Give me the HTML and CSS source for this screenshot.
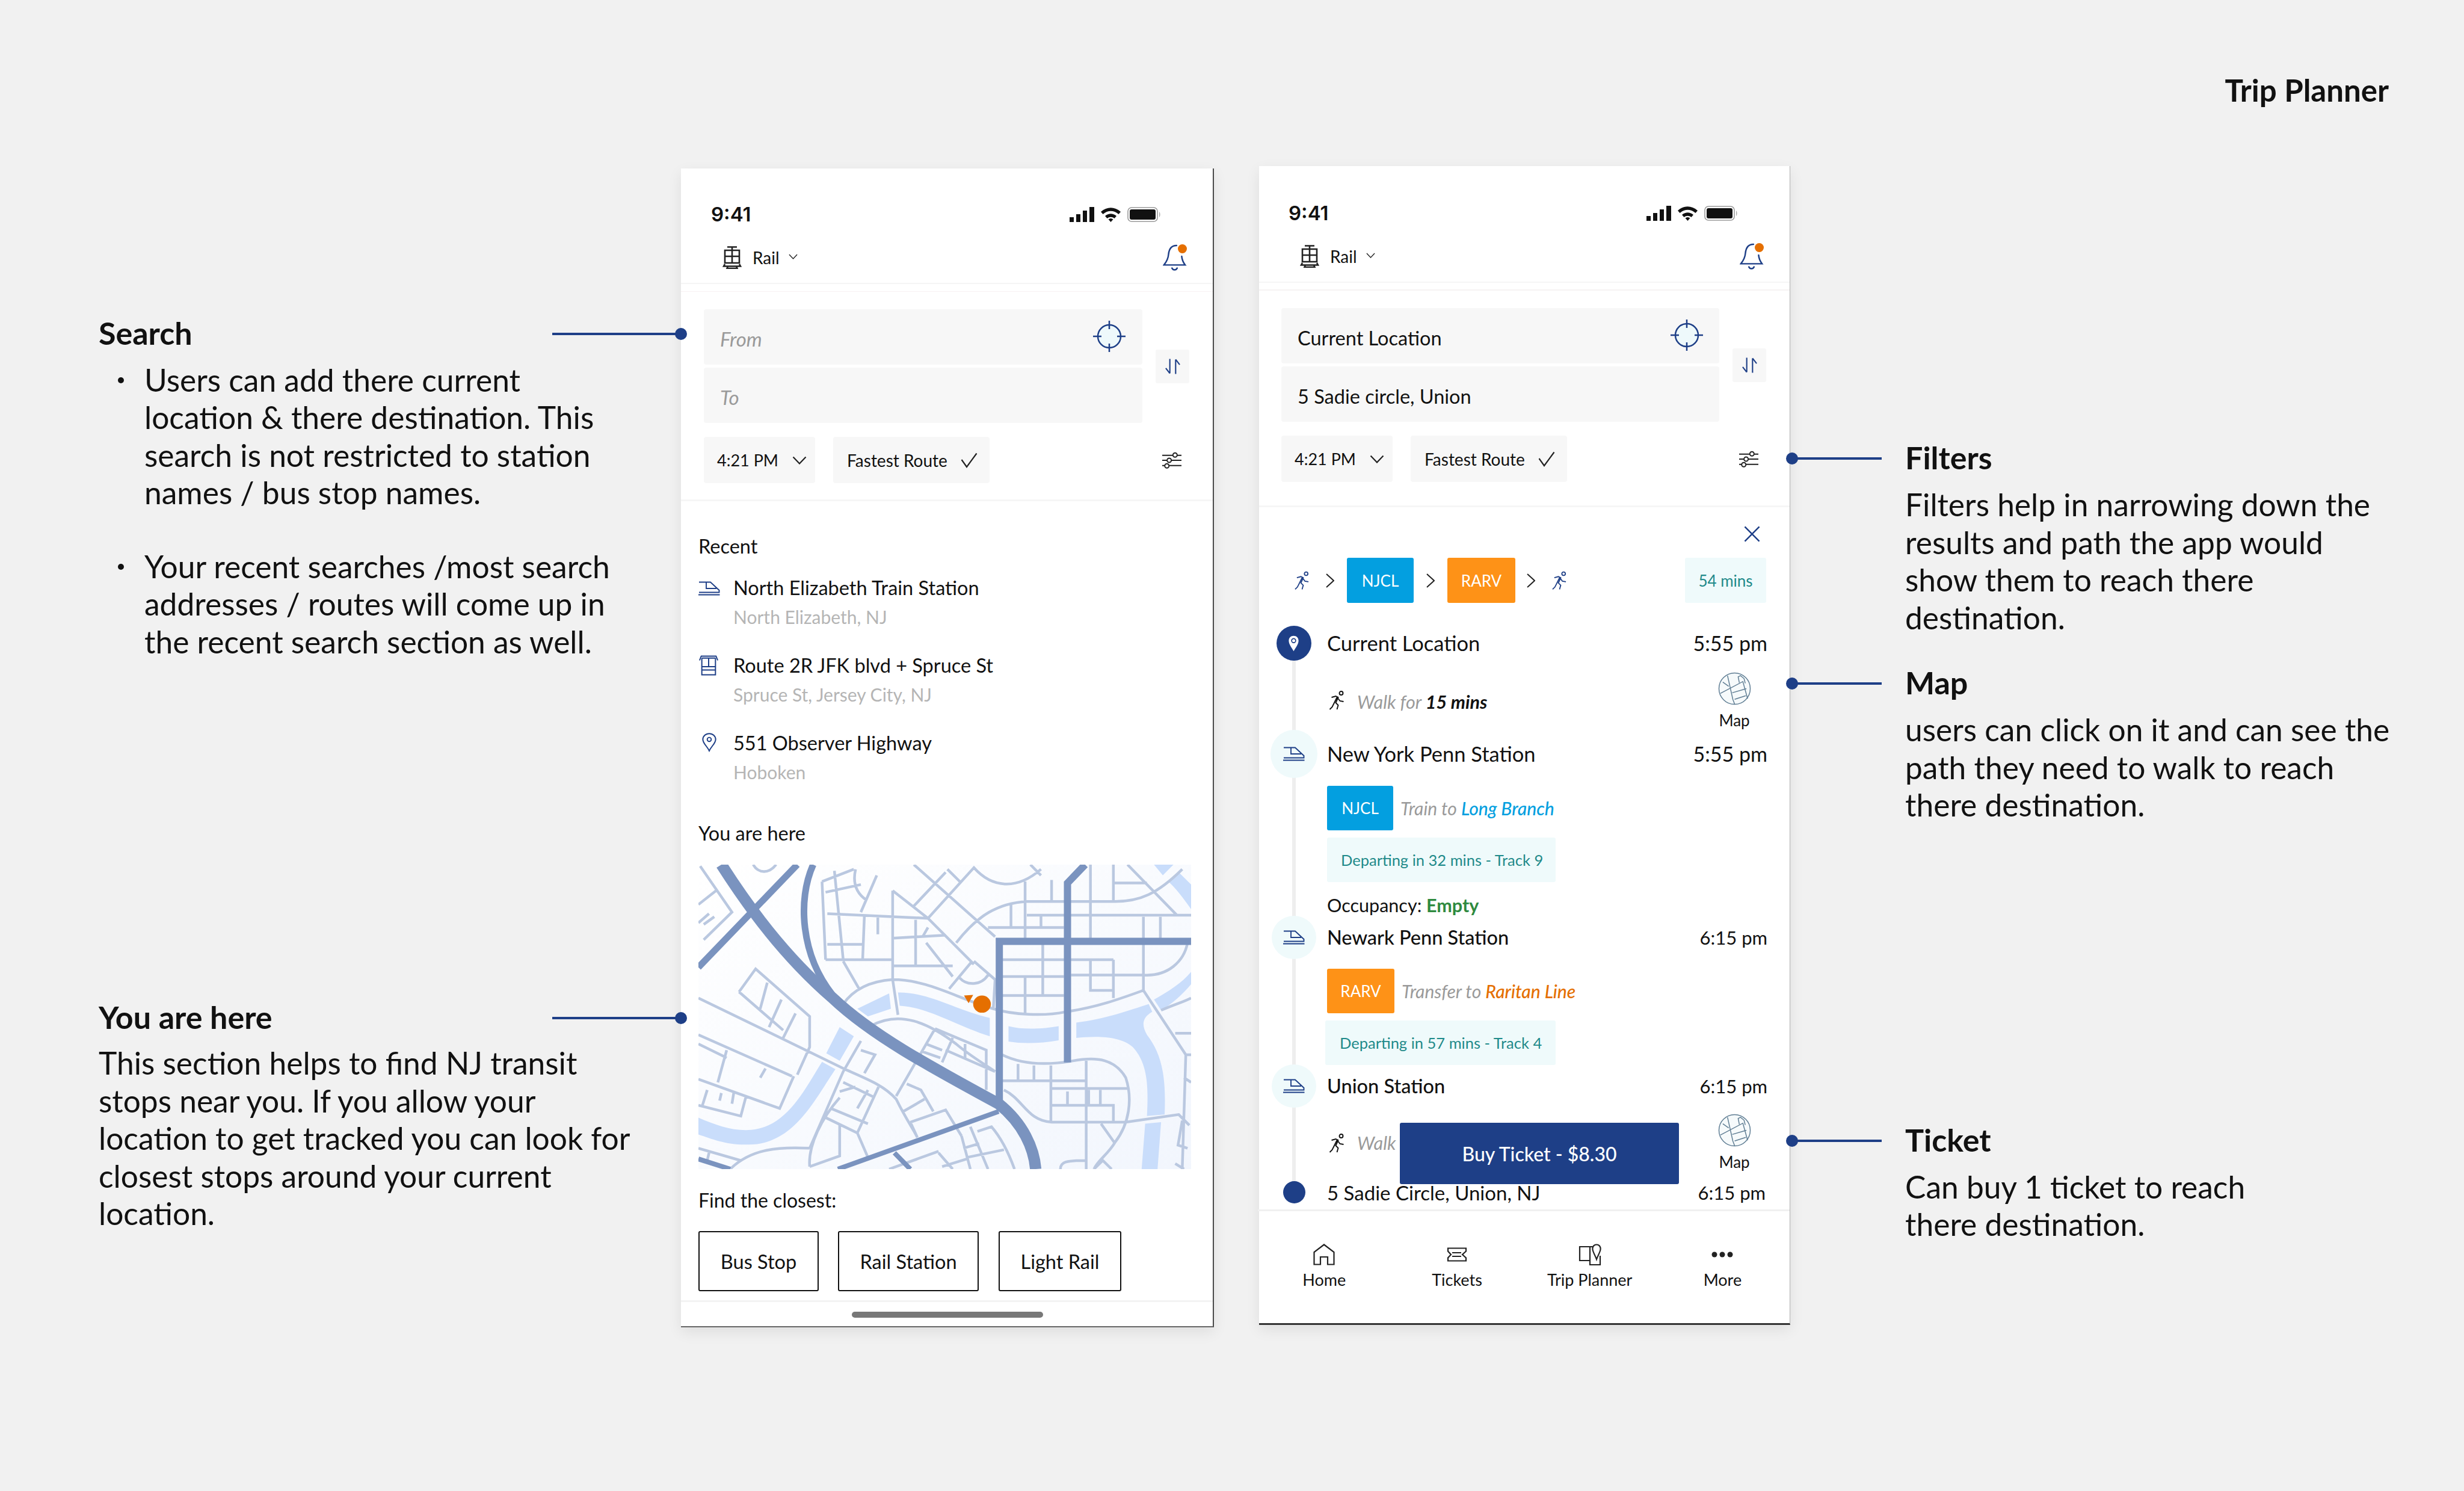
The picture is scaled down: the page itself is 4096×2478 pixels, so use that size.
FILE: index.html
```html
<!DOCTYPE html>
<html lang="en">
<head>
<meta charset="utf-8">
<title>Trip Planner</title>
<link rel="stylesheet" href="styles.css">
</head>
<body>
<svg class="sprite" xmlns="http://www.w3.org/2000/svg">
  <symbol id="i-rail" viewBox="0 0 32 38"><path d="M8 1.500H24M16 1.500V7M4 7H28V28H4ZM4 17H28M16 7V28M4 30L2 33.500H30L28 30M9 33.500L7.500 37H24.500L23 33.500" fill="none" stroke="#222" stroke-width="2.600"/></symbol>
  <symbol id="i-bell" viewBox="0 0 42 48"><path d="M24 3C15 3 11 9 10 18C9.500 26 6 32 2 37H39C36 33 33.500 29 33 22M16 42.500C18 46.500 23 46.500 25 42.500" fill="none" stroke="#1e3f87" stroke-width="2.600" stroke-linecap="round"/></symbol>
  <symbol id="i-cross" viewBox="0 0 54 52"><circle cx="27" cy="26" r="19" fill="#eef9fb" stroke="#1e3f87" stroke-width="2.500"/><path d="M27 0V14M27 38V52M0 26H14M40 26H54" stroke="#1e3f87" stroke-width="2.500"/></symbol>
  <symbol id="i-swap" viewBox="0 0 28 28"><path d="M9 1V26M9 26L2 17M19 27V2M19 2L26 11" fill="none" stroke="#1e3f87" stroke-width="2.200"/></symbol>
  <symbol id="i-down" viewBox="0 0 24 14"><path d="M1.500 1.500L12 12.500L22.500 1.500" fill="none" stroke="#222" stroke-width="2.200"/></symbol>
  <symbol id="i-check" viewBox="0 0 28 26"><path d="M1.500 12L10 24L26.500 1.500" fill="none" stroke="#222" stroke-width="2.200"/></symbol>
  <symbol id="i-filter" viewBox="0 0 34 28"><path d="M1 5.500H34M1 14H34M1 23H34" stroke="#222" stroke-width="2.200"/><circle cx="23" cy="5" r="3.600" fill="#fff" stroke="#222" stroke-width="2"/><circle cx="13" cy="14" r="3.600" fill="#fff" stroke="#222" stroke-width="2"/><circle cx="9" cy="23.500" r="3.600" fill="#fff" stroke="#222" stroke-width="2"/></symbol>
  <symbol id="i-train" viewBox="0 0 36 24"><path d="M1 1.500H20L34.500 15V18.500H1M13 1.500V12H30M0 22.500H35.500" fill="none" stroke="#1e3f87" stroke-width="1.900"/></symbol>
  <symbol id="i-stop" viewBox="0 0 34 36"><path d="M1 9L4 1.500H30L33 9M5 5H29M5 5V34.500H29V5M5 20H29M5 26H29M17 5V20" fill="none" stroke="#1e3f87" stroke-width="2.100"/></symbol>
  <symbol id="i-pin" viewBox="0 0 26 34"><path d="M13 32.500C9 24 1.500 19 1.500 12C1.500 6 6.500 1.500 13 1.500C19.500 1.500 24.500 6 24.500 12C24.500 19 17 24 13 32.500Z" fill="none" stroke="#1e3f87" stroke-width="2.200"/><circle cx="13" cy="12" r="3.600" fill="none" stroke="#1e3f87" stroke-width="2"/></symbol>
  <symbol id="i-walk" viewBox="0 0 26 32"><g fill="none" stroke="currentColor" stroke-width="1.900"><circle cx="20" cy="4" r="3"/><path d="M4 11L11 9L15 11L11 20L15 24L13 31M13 11L8 21L5 27L1 31M15 13L18 17L24 18"/></g></symbol>
  <symbol id="i-chev" viewBox="0 0 14 24"><path d="M1 1L13 12L1 23" fill="none" stroke="#222" stroke-width="2"/></symbol>
  <symbol id="i-globe" viewBox="0 0 56 56"><g fill="#f6fafb" stroke="#5f7d93" stroke-width="1.500"><circle cx="28" cy="28" r="26.500"/><path fill="none" d="M16 6L25 46L28 54M4 36L42 16L50 45M8 17L18 24M24 35L48 28M28 46L47 40M36 18L34 8L38 6L44 11L46 19"/></g></symbol>
  <symbol id="i-home" viewBox="0 0 36 36"><path d="M1.500 34.500V14L18 1.500L34.500 14V34.500H24V22H12V34.500Z" fill="none" stroke="#222" stroke-width="2.200"/></symbol>
  <symbol id="i-ticket" viewBox="0 0 34 24"><path d="M2 1.500H32V6.500L26 12L32 17.500V22.500H2V17.500L7 12L2 6.500ZM9 9H24M9 15H24" fill="none" stroke="#222" stroke-width="2.200"/></symbol>
  <symbol id="i-trip" viewBox="0 0 38 36"><path d="M24 5H2V28H19V35H36V20M19 5V28M30 1.500C25 1.500 23 6 23.500 9.500C24 14 28 20 30 26C32 20 36 14 36.500 9.500C37 6 35 1.500 30 1.500Z" fill="none" stroke="#222" stroke-width="2.200"/></symbol>
  <symbol id="i-more" viewBox="0 0 36 12"><circle cx="5" cy="6" r="4.500" fill="#222"/><circle cx="18" cy="6" r="4.500" fill="#222"/><circle cx="31" cy="6" r="4.500" fill="#222"/></symbol>
  <symbol id="i-signal" viewBox="0 0 41 25"><path d="M0 17H7V25H0ZM11 12H18V25H11ZM22 6H29V25H22ZM33 0H41V25H33Z" fill="#111"/></symbol>
  <symbol id="i-wifi" viewBox="0 0 35 25"><path d="M1 8C11 -1 24 -1 34 8L30.500 12C22.500 5 12.500 5 4.500 12ZM8 15C14 10 21 10 27 15L23.500 19C20 16 15 16 11.500 19ZM13.500 20.500C16 18.500 19 18.500 21.500 20.500L17.500 25Z" fill="#111"/></symbol>
  <symbol id="i-batt" viewBox="0 0 56 25"><rect x="1" y="1" width="49" height="23" rx="6" fill="none" stroke="#999" stroke-width="1.600"/><rect x="4" y="4" width="43" height="17" rx="3" fill="#111"/><path d="M53 8C55 9 55 16 53 17Z" fill="#aaa"/></symbol>
</svg>

<main class="board">
  <h1 class="board-title">Trip Planner</h1>
  <div class="board-main">

    <section class="notes notes-left">
      <article class="note note-search pin-right">
        <h2 class="note-head">Search</h2>
        <ul class="note-list">
          <li>Users can add there current location &amp; there destination. This search is not restricted to station names / bus stop names.</li>
          <li>Your recent searches /most search addresses / routes will come up in the recent search section as well.</li>
        </ul>
      </article>
      <article class="note note-here pin-right">
        <h2 class="note-head">You are here</h2>
        <p class="note-body">This section helps to find NJ transit stops near you. If you allow your location to get tracked you can look for closest stops around your current location.</p>
      </article>
    </section>

    <section class="phone phone-a">
      <div class="status"><span class="clock">9:41</span><span class="status-icons"><svg class="ic-signal"><use href="#i-signal"/></svg><svg class="ic-wifi"><use href="#i-wifi"/></svg><svg class="ic-batt"><use href="#i-batt"/></svg></span></div>
      <div class="topbar">
        <svg class="ic-rail"><use href="#i-rail"/></svg><span class="rail-label">Rail</span><svg class="ic-raildown"><use href="#i-down"/></svg>
        <span class="bell"><svg class="ic-bell"><use href="#i-bell"/></svg></span>
      </div>
      <div class="search search-a">
        <div class="fields">
          <div class="field-col">
            <div class="field placeholder">From<svg class="ic-cross"><use href="#i-cross"/></svg></div>
            <div class="field placeholder">To</div>
          </div>
          <div class="swap"><svg class="ic-swap"><use href="#i-swap"/></svg></div>
        </div>
        <div class="chips">
          <div class="chip chip-time">4:21 PM<svg class="ic-down"><use href="#i-down"/></svg></div>
          <div class="chip chip-route">Fastest Route<svg class="ic-check"><use href="#i-check"/></svg></div>
          <svg class="ic-filter"><use href="#i-filter"/></svg>
        </div>
      </div>
      <div class="home-body">
        <div class="label label-recent">Recent</div>
        <div class="recent">
          <svg class="rec-icon ic-train"><use href="#i-train"/></svg>
          <div><div class="rec-title">North Elizabeth Train Station</div><div class="rec-sub">North Elizabeth, NJ</div></div>
        </div>
        <div class="recent">
          <svg class="rec-icon ic-stop"><use href="#i-stop"/></svg>
          <div><div class="rec-title">Route 2R JFK blvd + Spruce St</div><div class="rec-sub">Spruce St, Jersey City, NJ</div></div>
        </div>
        <div class="recent">
          <svg class="rec-icon ic-pin"><use href="#i-pin"/></svg>
          <div><div class="rec-title">551 Observer Highway</div><div class="rec-sub">Hoboken</div></div>
        </div>
        <div class="label label-here">You are here</div>
        <svg class="map" viewBox="70 35 1395 993" preserveAspectRatio="none" xmlns="http://www.w3.org/2000/svg">
          <defs><linearGradient id="mapbg" x1="0" y1="0" x2="1" y2="1"><stop offset="0" stop-color="#ffffff"/><stop offset="1" stop-color="#f2f6fd"/></linearGradient></defs>
          <rect x="70" y="35" width="1395" height="993" fill="url(#mapbg)"/>
          <path class="water" d="M520,505 L610,455 L615,505 L550,530 Z M635,452 C720,450 800,510 895,535 L895,595 C800,560 720,500 640,495 Z M948,562 C990,575 1050,570 1090,562 L1090,608 C1040,618 990,620 948,612 Z M1140,550 C1220,540 1290,510 1345,490 L1355,515 C1325,535 1325,560 1340,590 C1380,650 1395,720 1390,850 L1340,855 C1345,750 1340,680 1300,630 C1260,590 1190,595 1140,600 Z M1335,880 L1380,875 L1370,1028 L1325,1028 Z M470,565 L510,595 L470,675 L432,650 Z M420,678 L458,702 C400,800 340,950 210,948 C150,950 110,930 70,915 L70,860 C120,885 170,905 220,900 C320,890 370,770 420,678 Z M1360,35 L1415,35 L1385,70 Z M1430,60 L1465,100 L1465,180 C1440,140 1420,110 1400,90 Z M1465,385 L1465,425 C1440,460 1410,490 1380,510 L1360,475 C1400,450 1440,420 1465,385 Z"/>
          <path class="minor" d="M70,165 L120,120 M75,40 L165,190 L85,280 M70,225 L100,195 M85,230 L115,205 M225,35 C240,65 270,65 290,35 M420,90 L430,345 M420,90 L510,50 M430,125 L530,100 M455,55 L480,345 M435,195 L720,210 M435,295 L535,295 M430,345 L620,345 M530,190 L575,70 M540,200 L535,345 M578,200 L578,262 M620,120 L620,410 M620,275 L770,265 M685,215 L685,365 M620,365 L790,365 M515,50 C505,100 520,130 545,150 M620,120 L720,210 L850,360 M680,35 L910,270 M775,50 L810,90 M680,170 L770,60 M720,210 L850,45 C900,110 970,120 1040,50 M1010,35 L1040,70 M720,240 L705,270 M715,290 L790,400 M800,290 C860,200 920,160 1000,155 L1250,155 C1320,155 1370,130 1440,50 M995,90 V275 M1070,85 V155 M1180,35 V280 M1245,35 V155 M1245,95 H1340 M1285,35 L1425,200 M1330,205 V280 M1378,205 V280 M955,165 V240 M890,240 H1105 M1000,200 H1465 M1040,200 V240 M1045,290 V460 M995,400 V520 M1180,345 V445 H1245 M1245,345 V470 M1330,290 V445 M930,345 H1245 M930,400 H1105 M1125,395 H1330 C1400,400 1445,350 1455,290 M930,462 H1105 M480,490 C510,440 560,415 620,410 C720,410 800,470 905,505 C960,525 1050,530 1110,515 C1200,500 1270,470 1330,445 L1450,655 L1440,1028 M1380,510 C1420,490 1450,480 1465,470 M1420,585 H1465 M1450,655 H1465 M1445,730 L1465,745 M560,560 C640,510 720,550 800,620 C840,660 900,700 910,710 M930,655 C1000,695 1080,685 1130,675 C1200,660 1250,670 1280,730 C1300,800 1290,880 1250,940 C1230,980 1200,1000 1190,1028 M975,685 V740 M1020,690 V740 M1068,690 V875 M1168,675 V1028 M930,740 H1165 M1068,765 H1290 M1115,775 V820 M1068,820 H1245 V875 M1175,770 V820 M1208,770 V820 M935,770 C990,800 1000,870 1070,875 H1280 L1430,850 L1460,885 M1440,870 L1428,950 L1455,960 M1210,880 L1250,945 M1095,1028 C1095,1005 1110,1000 1165,1000 M1190,1028 L1215,1000 L1240,1028 M1420,1010 L1445,1028 M70,470 L490,705 C560,740 600,760 630,800 C660,870 680,900 690,925 M185,450 L232,375 L385,530 L385,630 L350,720 M185,450 L310,575 M265,420 L245,505 M305,475 L270,565 M345,520 L310,600 M70,590 L335,725 M150,640 L125,745 M70,620 L150,665 M70,735 L300,830 L340,725 M260,700 L245,730 M95,770 L80,825 M135,780 L130,805 M170,780 L165,815 M205,790 L190,855 L70,820 M530,610 L480,710 L385,960 M385,1020 C380,950 420,860 470,795 M385,960 C300,955 220,960 160,1028 M385,1020 L470,985 V885 M70,960 L190,1000 M100,975 L95,1000 M430,860 L520,910 L550,990 M520,910 L580,760 M445,830 L550,880 M470,775 L515,760 M480,745 L570,795 M550,770 L520,830 M530,640 L570,655 L540,715 M740,570 L700,650 L630,790 M740,570 L885,640 V770 M715,620 L760,640 M705,645 L755,665 M790,600 L760,680 M825,620 V665 M770,640 L910,710 M660,750 L700,770 L735,840 M650,840 L710,800 M670,875 L770,835 L815,920 M670,875 L690,925 M840,890 L890,1028 M815,920 L840,1028 M860,905 L900,890 C930,930 950,980 965,1028 M830,990 L935,965 M820,960 L865,945 M750,975 L790,1028 M750,970 L610,1028 M760,1020 L830,995 M480,350 L525,440 M620,410 L635,525 M780,440 L845,350 M810,405 C830,430 870,430 890,395 M850,350 L910,410 L905,505"/>
          <path class="road r11" d="M350,35 L70,370 M395,35 C350,150 360,330 450,460"/>
          <path class="road r19" d="M135,35 C210,170 310,330 450,470 C560,590 720,690 920,815 C990,880 1020,960 1025,1028"/>
          <path class="road r12" d="M922,830 V285 H1465 M1165,35 L1115,95 V680"/>
          <path class="road r8" d="M465,1028 L920,840 M625,975 L670,1028 M70,995 L160,1028"/>
          <path class="spot" d="M822,462 L848,460 L835,487 Z"/>
          <ellipse class="spot" cx="873" cy="490" rx="25" ry="28"/>
        </svg>
        <div class="label label-closest">Find the closest:</div>
        <div class="closest">
          <div class="outline outline-bus">Bus Stop</div>
          <div class="outline outline-rail">Rail Station</div>
          <div class="outline outline-light">Light Rail</div>
        </div>
      </div>
      <div class="home-bar"><span class="home-indicator"></span></div>
    </section>

    <section class="phone phone-b">
      <div class="status"><span class="clock">9:41</span><span class="status-icons"><svg class="ic-signal"><use href="#i-signal"/></svg><svg class="ic-wifi"><use href="#i-wifi"/></svg><svg class="ic-batt"><use href="#i-batt"/></svg></span></div>
      <div class="topbar">
        <svg class="ic-rail"><use href="#i-rail"/></svg><span class="rail-label">Rail</span><svg class="ic-raildown"><use href="#i-down"/></svg>
        <span class="bell"><svg class="ic-bell"><use href="#i-bell"/></svg></span>
      </div>
      <div class="search search-b">
        <div class="fields">
          <div class="field-col">
            <div class="field">Current Location<svg class="ic-cross"><use href="#i-cross"/></svg></div>
            <div class="field">5 Sadie circle, Union</div>
          </div>
          <div class="swap"><svg class="ic-swap"><use href="#i-swap"/></svg></div>
        </div>
        <div class="chips">
          <div class="chip chip-time">4:21 PM<svg class="ic-down"><use href="#i-down"/></svg></div>
          <div class="chip chip-route">Fastest Route<svg class="ic-check"><use href="#i-check"/></svg></div>
          <svg class="ic-filter"><use href="#i-filter"/></svg>
        </div>
      </div>
      <div class="results">
        <div class="close-row"><svg class="ic-close" viewBox="0 0 28 28"><path d="M1.500 1.500L26.500 26.500M26.500 1.500L1.500 26.500" stroke="#1e3f87" stroke-width="2.600"/></svg></div>
        <div class="route">
          <svg class="ic-walk walk-navy"><use href="#i-walk"/></svg>
          <svg class="ic-chev"><use href="#i-chev"/></svg>
          <span class="badge badge-njcl">NJCL</span>
          <svg class="ic-chev"><use href="#i-chev"/></svg>
          <span class="badge badge-rarv">RARV</span>
          <svg class="ic-chev"><use href="#i-chev"/></svg>
          <svg class="ic-walk walk-navy"><use href="#i-walk"/></svg>
          <span class="mins">54 mins</span>
        </div>
        <div class="timeline">
          <div class="stop stop-first">
            <span class="marker marker-solid"><svg class="ic-pin-white" viewBox="0 0 26 40"><path d="M13 39C8 30 1 22 1 13C1 6 6 1 13 1C20 1 25 6 25 13C25 22 18 30 13 39Z" fill="#fff"/><circle cx="13" cy="13" r="5" fill="none" stroke="#1e3f87" stroke-width="2.500"/></svg></span>
            <span class="stop-name">Current Location</span><span class="stop-time">5:55 pm</span>
          </div>
          <div class="walk walk-one">
            <svg class="ic-walk walk-black"><use href="#i-walk"/></svg>
            <span class="walk-text">Walk for <b>15 mins</b></span>
            <span class="map-link"><svg class="ic-globe"><use href="#i-globe"/></svg><span>Map</span></span>
          </div>
          <div class="stop stop-ny">
            <span class="marker marker-soft"><svg class="ic-train"><use href="#i-train"/></svg></span>
            <span class="stop-name">New York Penn Station</span><span class="stop-time">5:55 pm</span>
          </div>
          <div class="leg leg-njcl"><span class="line-badge badge-njcl">NJCL</span><span class="leg-text">Train to <b class="to-blue">Long Branch</b></span></div>
          <div class="depart">Departing in 32 mins - Track 9</div>
          <div class="occupancy">Occupancy: <b>Empty</b></div>
          <div class="stop stop-mid">
            <span class="marker marker-soft"><svg class="ic-train"><use href="#i-train"/></svg></span>
            <span class="stop-name stop-strong">Newark Penn Station</span><span class="stop-time stop-time-six">6:15 pm</span>
          </div>
          <div class="leg leg-rarv"><span class="line-badge badge-rarv">RARV</span><span class="leg-text">Transfer to <b class="to-orange">Raritan Line</b></span></div>
          <div class="depart depart-b">Departing in 57 mins - Track 4</div>
          <div class="stop stop-union">
            <span class="marker marker-soft"><svg class="ic-train"><use href="#i-train"/></svg></span>
            <span class="stop-name stop-strong">Union Station</span><span class="stop-time stop-time-six">6:15 pm</span>
          </div>
          <div class="walk walk-two">
            <svg class="ic-walk walk-black"><use href="#i-walk"/></svg>
            <span class="walk-text">Walk</span>
            <span class="map-link"><svg class="ic-globe"><use href="#i-globe"/></svg><span>Map</span></span>
          </div>
          <div class="stop stop-last">
            <span class="marker"><span class="marker-dot"></span></span>
            <span class="stop-name stop-name-last">5 Sadie Circle, Union, NJ</span><span class="stop-time stop-time-six stop-time-last">6:15 pm</span>
          </div>
          <div class="buy">Buy Ticket - $8.30</div>
        </div>
      </div>
      <nav class="tabs">
        <div class="tab"><span class="tab-icon"><svg class="ic-home"><use href="#i-home"/></svg></span>Home</div>
        <div class="tab"><span class="tab-icon"><svg class="ic-ticket"><use href="#i-ticket"/></svg></span>Tickets</div>
        <div class="tab"><span class="tab-icon"><svg class="ic-trip"><use href="#i-trip"/></svg></span>Trip Planner</div>
        <div class="tab"><span class="tab-icon"><svg class="ic-more"><use href="#i-more"/></svg></span>More</div>
      </nav>
    </section>

    <section class="notes notes-right">
      <article class="note note-filters pin-left">
        <h2 class="note-head">Filters</h2>
        <p class="note-body">Filters help in narrowing down the results and path the app would show them to reach there destination.</p>
      </article>
      <article class="note note-map pin-left">
        <h2 class="note-head">Map</h2>
        <p class="note-body">users can click on it and can see the path they need to walk to reach there destination.</p>
      </article>
      <article class="note note-ticket pin-left">
        <h2 class="note-head">Ticket</h2>
        <p class="note-body">Can buy 1 ticket to reach<br>there destination.</p>
      </article>
    </section>
  </div>
</main>
</body>
</html>
```

FILE: styles.css
```css
* { box-sizing: border-box; }
html, body { margin: 0; padding: 0; }
body { width: 4096px; height: 2478px; background: #f1f1f1; color: #111; font-family: "Lato", "Liberation Sans", sans-serif; overflow: hidden; }
.sprite { display: none; }
svg { display: block; flex: none; }

.board { width: 4096px; height: 2478px; }
.board-title { margin: 0; height: 276px; padding: 120px 125px 0 0; text-align: right; font-size: 51px; line-height: 60px; font-weight: 700; }
.board-main { display: flex; align-items: flex-start; }

/* annotation columns */
.notes-left { width: 1132px; padding-left: 164px; flex: none; }
.notes-right { flex: 1; padding-left: 191px; }
.note { position: relative; z-index: 2; }
.note-head { margin: 0; font-size: 52px; line-height: 62px; font-weight: 700; }
.note-body { margin: 16px 0 0; font-size: 51.500px; line-height: 62.500px; font-weight: 400; }
.note-list { margin: 16px 0 0; padding: 0 0 0 76px; list-style: none; font-size: 51.500px; line-height: 62.300px; width: 880px; }
.note-list li { position: relative; width: 800px; }
.note-list li + li { margin-top: 61px; }
.note-list li::before { content: ""; position: absolute; left: -44px; top: 27px; width: 10px; height: 10px; border-radius: 50%; background: #111; }
.note-search { margin-top: 246px; }
.note-here { margin-top: 562px; width: 900px; }
.note-here .note-body { margin-top: 14px; }
.note-filters { margin-top: 453px; }
.note-filters .note-body { width: 800px; }
.note-map { margin-top: 46px; }
.note-map .note-body { width: 830px; }
.note-ticket { margin-top: 494px; }

.pin-right::before, .pin-left::before { content: ""; position: absolute; top: 31px; height: 4px; background: #1e3f87; }
.pin-right::after, .pin-left::after { content: ""; position: absolute; top: 23px; width: 20px; height: 20px; border-radius: 50%; background: #1e3f87; }
.pin-right::before { left: 754px; width: 214px; }
.pin-right::after { left: 958px; }
.pin-left::before { left: -188px; width: 149px; }
.pin-left::after { left: -198px; }

/* phones */
.phone { flex: none; background: #fff; box-shadow: 0 8px 22px rgba(0, 0, 0, .08); position: relative; }
.phone-a { width: 886px; height: 1926px; margin-top: 4px; border-right: 2px solid #4a4a4a; border-bottom: 2px solid #666; }
.phone-b { width: 883px; height: 1926px; margin-left: 75px; border-right: 1px solid #b0b0b0; border-bottom: 3px solid #333; }

.status { height: 112px; padding: 40px 86px 0 50px; display: flex; align-items: center; justify-content: space-between; }
.phone-b .status { height: 114px; padding-top: 42px; padding-left: 49px; }
.clock { font-family: "Inter", "Liberation Sans", sans-serif; font-size: 33px; font-weight: 600; }
.status-icons { display: flex; align-items: center; gap: 10px; }
.ic-signal { width: 41px; height: 25px; }
.ic-wifi { width: 35px; height: 25px; }
.ic-batt { width: 56px; height: 25px; }

.topbar { height: 80px; padding: 0 43px 6px 69px; display: flex; align-items: center; font-size: 28px; border-bottom: 2px solid #f5f5f5; }
.phone-b .topbar { padding-left: 68px; }
.ic-rail { width: 32px; height: 38px; }
.rail-label { margin-left: 18px; }
.ic-raildown { width: 15px; height: 9px; margin-left: 15px; margin-top: -4px; }
.bell { position: relative; margin-left: auto; width: 40px; height: 46px; }
.ic-bell { width: 40px; height: 46px; }
.bell::after { content: ""; position: absolute; right: 0; top: 1px; width: 15px; height: 15px; border-radius: 50%; background: #e56f00; }

.search { padding: 29px 39px 27px 38px; border-bottom: 3px solid #f6f6f6; }
.search-a { margin-top: 12px; border-top: 1px solid #f9f2f3; }
.search-b { margin-top: 11px; padding-left: 37px; padding-top: 29px; border-top: 2px solid #f6f3f3; padding-bottom: 39px; }
.fields { display: flex; gap: 22px; }
.field-col { width: 729px; display: flex; flex-direction: column; gap: 5px; }
.field { height: 92px; background: #f7f7f7; border-radius: 4px; padding: 6px 27px 0; display: flex; align-items: center; font-size: 32.500px; position: relative; }
.placeholder { color: #9a9a9a; font-style: italic; font-size: 33px; }
.ic-cross { position: absolute; left: 647px; top: 19px; width: 54px; height: 52px; }
.swap { width: 56px; height: 56px; margin-top: 67px; background: #f7f7f7; border-radius: 3px; display: flex; align-items: center; justify-content: center; }
.ic-swap { width: 27px; height: 28px; }
.chips { margin-top: 23px; display: flex; align-items: center; }
.chip { height: 77px; background: #f7f7f7; border-radius: 4px; display: flex; align-items: center; font-size: 28px; }
.chip-time { width: 185px; padding-left: 22px; font-size: 27px; }
.chip-route { width: 260px; margin-left: 30px; padding-left: 23px; }
.ic-down { width: 24px; height: 14px; position: relative; margin-left: 23px; }
.chip-route .ic-check { width: 28px; height: 26px; margin-left: 22px; }
.ic-filter { width: 33px; height: 28px; margin-left: auto; margin-right: 13px; }

.home-body { padding-left: 29px; }
.label { font-size: 32.500px; line-height: 36px; }
.label-recent { padding-top: 57px; height: 93px; }
.recent { display: flex; margin-top: 33px; }
.recent + .recent { margin-top: 45px; }
.rec-icon { width: 36px; margin-right: 22px; }
.rec-icon.ic-train { height: 24px; margin-top: 7px; }
.rec-icon.ic-stop { height: 34px; margin-top: 1px; width: 34px; margin-right: 24px; }
.rec-icon.ic-pin { width: 24px; height: 33px; margin: 0 28px 0 6px; }
.rec-title { font-size: 32.500px; line-height: 36px; }
.rec-sub { margin-top: 12px; font-size: 30px; line-height: 36px; color: #b5b5b5; }
.label-here { margin-top: 66px; }
.map { width: 819px; height: 506px; margin-top: 34px; }
.water { fill: #c9ddfb; }
.minor, .road { fill: none; vector-effect: non-scaling-stroke; stroke-linejoin: miter; }
.minor { stroke: #bac8e0; stroke-width: 4.500px; }
.road { stroke: #7a93bf; }
.r8 { stroke-width: 8px; }
.r11 { stroke-width: 11px; }
.r12 { stroke-width: 12px; }
.r19 { stroke-width: 19px; }
.spot { fill: #e56f00; }
.label-closest { margin-top: 34px; font-size: 32px; }
.closest { display: flex; margin-top: 33px; }
.outline { height: 100px; border: 2px solid #111; border-radius: 3px; display: flex; align-items: center; justify-content: center; font-size: 32.500px; }
.outline-bus { width: 200px; }
.outline-rail { width: 234px; margin-left: 32px; }
.outline-light { width: 204px; margin-left: 33px; }
.home-bar { margin-top: 15px; border-top: 3px solid #f3f3f3; padding-top: 16px; display: flex; }
.home-indicator { width: 318px; height: 10px; margin-left: 284px; border-radius: 5px; background: #787878; }

/* results */
.results { height: 1167px; overflow: hidden; }
.close-row { height: 58px; padding: 31px 49px 0 0; display: flex; justify-content: flex-end; }
.ic-close { width: 27px; height: 27px; }
.route { margin-top: 26px; height: 75px; padding: 0 39px 0 59px; display: flex; align-items: center; }
.ic-walk { width: 25px; height: 32px; }
.walk-navy { color: #1e3f87; }
.walk-black { color: #111; }
.ic-chev { width: 14px; height: 24px; margin: 0 21px; }
.route .ic-walk + .ic-chev { margin-left: 27px; }
.route .badge-rarv + .ic-chev { margin: 0 28px 0 19px; }
.badge { height: 75px; width: 111px; border-radius: 3px; color: #fff; font-size: 26px; display: flex; align-items: center; justify-content: center; }
.badge-rarv { width: 113px; }
.badge-njcl { background: #039fe0; }
.badge-rarv { background: #fe9217; }
.mins { margin-left: auto; width: 135px; height: 75px; background: #effafb; border-radius: 3px; color: #1f8a8a; font-size: 26px; display: flex; align-items: center; justify-content: center; }

.timeline { position: relative; margin-top: 38px; }
.timeline::before { content: ""; position: absolute; left: 55px; top: 50px; width: 6px; height: 880px; background: #eeeeee; }
.stop { position: relative; display: flex; align-items: center; padding-right: 37px; }
.marker { width: 113px; flex: none; position: relative; align-self: stretch; }
.marker-solid::before, .marker-soft::before { content: ""; position: absolute; left: 58px; top: 50%; transform: translate(-50%, -50%); border-radius: 50%; }
.marker-solid::before { width: 58px; height: 58px; background: #1e3f87; }
.marker-soft::before { width: 74px; height: 72px; background: #effafb; }
.stop-ny .marker-soft::before { width: 78px; height: 80px; }
.ic-pin-white { position: absolute; left: 47px; top: 16px; width: 21px; height: 27px; }
.marker .ic-train { position: absolute; left: 40px; top: 50%; margin-top: -12px; width: 36px; height: 24px; }
.marker-dot { position: absolute; left: 40px; top: 0; width: 37px; height: 37px; border-radius: 50%; background: #1e3f87; }
.stop-name { font-size: 34.500px; line-height: 40px; position: relative; }
.stop-strong { font-size: 32.500px; font-weight: 500; }
.stop-name-last { font-size: 33px; }
.stop-time { margin-left: auto; font-size: 34px; line-height: 40px; position: relative; }
.stop-time-six { font-size: 31px; }
.stop-time-last { margin-right: 3px; }
.stop-first { height: 58px; }
.stop-ny { height: 80px; }
.stop-mid { height: 71px; }
.stop-union { height: 72px; margin-top: -1px; }
.stop-last { height: 37px; }
.walk { position: relative; display: flex; align-items: flex-start; padding: 0 52px 0 116px; }
.walk-one { height: 115px; }
.walk-two { height: 122px; }
.walk .ic-walk { width: 27px; height: 32px; }
.walk-one .ic-walk { margin-top: 50px; }
.walk-two .ic-walk { margin-top: 43px; }
.walk-text { margin-left: 20px; font-size: 30.500px; font-style: italic; color: #9a9a9a; line-height: 36px; }
.walk-text b { color: #111; font-weight: 700; }
.walk-one .walk-text { margin-top: 50px; }
.walk-two .walk-text { margin-top: 40px; }
.map-link { margin-left: auto; width: 80px; display: flex; flex-direction: column; align-items: center; font-size: 26px; line-height: 32px; }
.walk-one .map-link { margin-top: 19px; }
.walk-two .map-link { margin-top: 10px; }
.ic-globe { width: 55px; height: 55px; margin-bottom: 9px; }
.leg { display: flex; align-items: center; padding-left: 113px; }
.leg-njcl { margin-top: 13px; }
.leg-rarv { margin-top: 17px; }
.line-badge { height: 74px; width: 110px; border-radius: 3px; color: #fff; font-size: 26px; display: flex; align-items: center; justify-content: center; }
.leg-rarv .line-badge { width: 112px; }
.leg-text { margin-left: 12px; font-size: 30px; font-style: italic; color: #9a9a9a; }
.leg-text b { font-weight: 500; }
.to-blue { color: #039fe0; }
.to-orange { color: #e56f00; }
.depart { margin: 12px 0 0 113px; width: 380px; height: 74px; padding-left: 23px; background: #effafb; border-radius: 3px; display: flex; align-items: center; color: #1f8a8a; font-size: 25.500px; position: relative; }
.depart-b { margin-left: 110px; width: 383px; padding-left: 24px; }
.occupancy { margin: 20px 0 0 113px; font-size: 30.500px; line-height: 36px; position: relative; }
.occupancy b { color: #2f8a3f; font-weight: 700; }
.buy { position: absolute; left: 234px; top: 826px; width: 464px; height: 102px; background: #1e3f87; border-radius: 3px; color: #fff; font-size: 32px; font-weight: 500; display: flex; align-items: center; justify-content: center; }

.tabs { border-top: 3px solid #f0f0f0; margin-left: -2px; display: grid; grid-template-columns: repeat(4, 220.7px); }
.tab { display: flex; flex-direction: column; align-items: center; font-size: 27px; line-height: 34px; }
.tab-icon { height: 97px; padding-top: 46px; display: flex; align-items: center; justify-content: center; }
.ic-home { width: 36px; height: 36px; }
.ic-ticket { width: 34px; height: 24px; }
.ic-trip { width: 38px; height: 36px; }
.ic-more { width: 36px; height: 12px; }
```
